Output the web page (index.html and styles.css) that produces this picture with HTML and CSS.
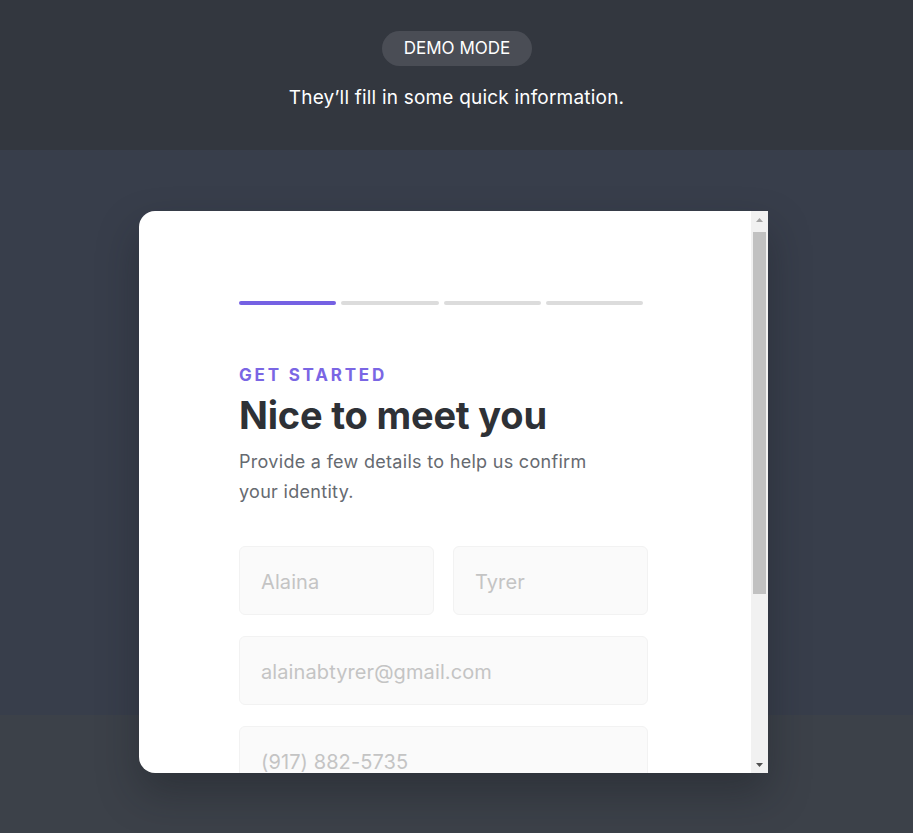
FILE: index.html
```html
<!DOCTYPE html>
<html lang="en">
<head>
<meta charset="utf-8">
<title>Demo mode</title>
<link rel="stylesheet" href="styles.css">
</head>
<body>
<header class="top">
  <div class="pill">DEMO MODE</div>
  <p class="caption">They’ll fill in some quick information.</p>
</header>
<main class="stage">
  <div class="card">
    <div class="viewport">
      <div class="form">
        <div class="progress">
          <span class="seg active"></span>
          <span class="seg"></span>
          <span class="seg"></span>
          <span class="seg"></span>
        </div>
        <div class="eyebrow">GET STARTED</div>
        <h1 class="title">Nice to meet you</h1>
        <p class="lead">Provide a few details to help us confirm your identity.</p>
        <div class="row">
          <div class="field">Alaina</div>
          <div class="field">Tyrer</div>
        </div>
        <div class="field">alainabtyrer@gmail.com</div>
        <div class="field">(917) 882-5735</div>
      </div>
    </div>
    <div class="scrollbar">
      <div class="sb-btn up"><svg width="7" height="4" viewBox="0 0 7 4"><path d="M0 4 L3.5 0 L7 4 Z" fill="#a3a3a3"/></svg></div>
      <div class="sb-track"><div class="sb-thumb"></div></div>
      <div class="sb-btn down"><svg width="7" height="4" viewBox="0 0 7 4"><path d="M0 0 L3.5 4 L7 0 Z" fill="#505050"/></svg></div>
    </div>
  </div>
</main>
</body>
</html>
```
FILE: styles.css
```css
* { box-sizing: border-box; }
html, body { margin: 0; padding: 0; }
body {
  width: 913px;
  height: 833px;
  overflow: hidden;
  background: #33373f;
  font-family: Inter, "Open Sans", sans-serif;
}
.top {
  height: 150px;
  background: #33373f;
  display: flex;
  flex-direction: column;
  align-items: center;
  padding-top: 31px;
}
.pill {
  height: 35px;
  padding: 0 22px;
  border-radius: 18px;
  background: #4a4d55;
  color: #ffffff;
  font-size: 17px;
  line-height: 35px;
  letter-spacing: 0;
  margin-left: 1px;
}
.caption {
  margin: 19px 0 0 0;
  color: #ffffff;
  font-size: 19px;
  line-height: 26px;
  letter-spacing: 0.2px;
}
.stage {
  height: 683px;
  background: linear-gradient(to bottom, #383e4b 0, #383e4b 565px, #3c4149 565px, #3c4149 100%);
  padding-top: 61px;
  padding-left: 139px;
}
.card {
  width: 629px;
  height: 562px;
  display: flex;
  background: #ffffff;
  border-radius: 16px 0 0 16px;
  overflow: hidden;
  box-shadow: 0 20px 40px rgba(20, 24, 30, 0.35);
}
.viewport {
  flex: 1;
  overflow: hidden;
  padding: 90px 0 0 100px;
}
.form { width: 409px; }
.progress {
  display: flex;
  gap: 5px;
  width: 404px;
}
.seg {
  flex: 1;
  height: 4px;
  border-radius: 2px;
  background: #dcdcdc;
}
.seg.active { background: #7561e3; }
.eyebrow {
  margin-top: 60px;
  color: #7a66e4;
  font-weight: 700;
  font-size: 17px;
  letter-spacing: 2.8px;
  line-height: 20px;
}
.title {
  margin: 8px 0 0 0;
  color: #2e3136;
  font-size: 38px;
  font-weight: 700;
  line-height: 44px;
  letter-spacing: -0.2px;
}
.lead {
  margin: 10px 0 0 0;
  width: 380px;
  color: #666a70;
  font-size: 18px;
  line-height: 30px;
  letter-spacing: 0.3px;
}
.row {
  display: flex;
  gap: 19px;
  margin-top: 39px;
}
.row .field { flex: 1; margin-top: 0; }
.field {
  height: 69px;
  margin-top: 21px;
  padding-left: 21px;
  background: #fafafa;
  border: 1px solid #f2f2f2;
  border-radius: 6px;
  color: #c4c4c4;
  font-size: 20px;
  line-height: 70px;
  letter-spacing: 0.1px;
}
.scrollbar {
  width: 17px;
  display: flex;
  flex-direction: column;
  background: #f1f1f1;
}
.sb-btn {
  height: 17px;
  display: flex;
  align-items: center;
  justify-content: center;
}
.sb-track {
  flex: 1;
  padding: 0 2px;
}
.sb-thumb {
  height: 362px;
  margin-top: 4px;
  background: #c1c1c1;
}
```
